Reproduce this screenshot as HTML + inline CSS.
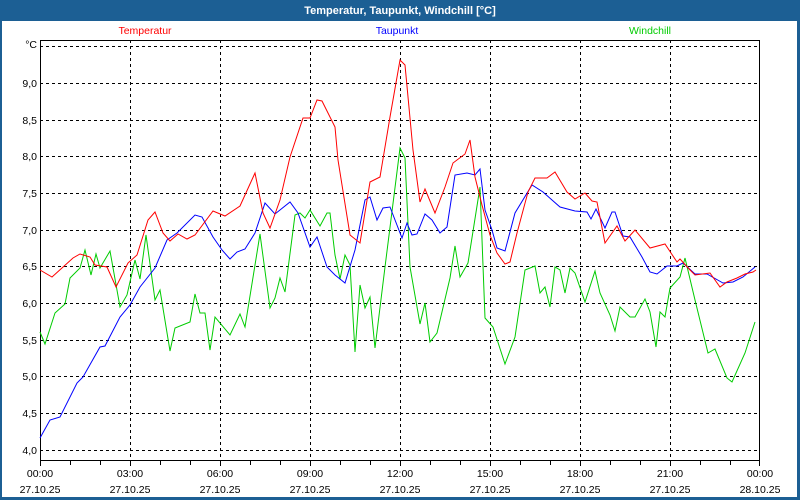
<!DOCTYPE html>
<html><head><meta charset="utf-8"><style>
html,body{margin:0;padding:0;background:#1c5f94;}
svg{display:block;font-family:"Liberation Sans",Arial,sans-serif;}
</style></head><body>
<svg width="800" height="500" viewBox="0 0 800 500" xmlns="http://www.w3.org/2000/svg">
<rect x="0" y="0" width="800" height="500" fill="#1c5f94"/>
<rect x="2" y="21" width="795" height="476" fill="#fff"/>
<text x="400" y="14" fill="#fff" font-size="11" font-weight="bold" text-anchor="middle">Temperatur, Taupunkt, Windchill [°C]</text>
<text x="145" y="34" fill="#ff0000" font-size="10.5" text-anchor="middle">Temperatur</text>
<text x="397" y="34" fill="#0000ff" font-size="10.5" text-anchor="middle">Taupunkt</text>
<text x="650" y="34" fill="#00cc00" font-size="10.5" text-anchor="middle">Windchill</text>
<g stroke="#000" stroke-width="1" stroke-dasharray="3,3" fill="none" shape-rendering="crispEdges">
<path d="M40 46.5H760M40 83.5H760M40 120.5H760M40 156.5H760M40 193.5H760M40 230.5H760M40 266.5H760M40 303.5H760M40 340.5H760M40 376.5H760M40 413.5H760M40 450.5H760"/>
<path d="M130.5 40V461M220.5 40V461M310.5 40V461M400.5 40V461M490.5 40V461M580.5 40V461M670.5 40V461"/>
</g>
<g stroke="#000" stroke-width="1" fill="none" shape-rendering="crispEdges">
<rect x="40.5" y="40.5" width="719" height="420"/>
<path d="M70.5 461v4M100.5 461v4M130.5 461v5M160.5 461v4M190.5 461v4M220.5 461v5M250.5 461v4M280.5 461v4M310.5 461v5M340.5 461v4M370.5 461v4M400.5 461v5M430.5 461v4M460.5 461v4M490.5 461v5M520.5 461v4M550.5 461v4M580.5 461v5M610.5 461v4M640.5 461v4M670.5 461v5M700.5 461v4M730.5 461v4M40.5 461v5M759.5 461v5"/>
</g>
<g font-size="10.5" fill="#000" text-anchor="end">
<text x="37" y="48">°C</text>
<text x="37" y="87">9,0</text><text x="37" y="124">8,5</text><text x="37" y="160">8,0</text>
<text x="37" y="197">7,5</text><text x="37" y="234">7,0</text><text x="37" y="270">6,5</text>
<text x="37" y="307">6,0</text><text x="37" y="344">5,5</text><text x="37" y="380">5,0</text>
<text x="37" y="417">4,5</text><text x="37" y="454">4,0</text>
</g>
<g font-size="10.5" fill="#000" text-anchor="middle">
<text x="40" y="477">00:00</text><text x="130" y="477">03:00</text><text x="220" y="477">06:00</text><text x="310" y="477">09:00</text><text x="400" y="477">12:00</text><text x="490" y="477">15:00</text><text x="580" y="477">18:00</text><text x="670" y="477">21:00</text><text x="760" y="477">00:00</text>
<text x="40" y="493">27.10.25</text><text x="130" y="493">27.10.25</text><text x="220" y="493">27.10.25</text><text x="310" y="493">27.10.25</text><text x="400" y="493">27.10.25</text><text x="490" y="493">27.10.25</text><text x="580" y="493">27.10.25</text><text x="670" y="493">27.10.25</text><text x="760" y="493">28.10.25</text>
</g>
<g fill="none" stroke-width="1">
<polyline stroke="#00cc00" points="40,332 45,344 55,313 65,304 70,278 80,268 85,250 91,275 96,254 100,268 110,251 120,307 127,295 135,260 140,279 146,235 155,300 160,290 170,351 175,328 190,322 195,294 200,313 205,313 210,350 215,317 230,335 240,314 245,327 260,234 270,308 275,298 280,278 285,292 295,215 300,213 305,218 310,210 320,226 327,213 330,213 335,255 340,279 345,255 350,265 355,352 360,285 365,308 370,297 375,348 385,267 400,148 405,158 410,267 420,324 425,303 430,342 437,333 450,278 455,246 460,277 468,263 480,187 485,318 493,327 505,364 515,337 525,270 535,266 540,293 545,287 550,307 555,267 560,270 565,293 570,268 575,273 585,302 595,271 600,293 610,315 615,331 620,307 630,317 635,317 645,299 650,312 656,347 660,312 665,317 670,288 680,277 685,258 695,300 708,353 715,349 727,378 732,382 745,353 755,322"/>
<polyline stroke="#0000ff" points="40,438 50,420 60,417 77,383 83,377 100,347 105,346 120,317 130,305 140,287 155,268 167,240 177,233 195,215 202,217 213,237 222,250 230,259 237,252 245,249 255,233 265,203 275,214 290,202 298,213 310,247 317,237 327,267 335,275 345,283 355,250 365,200 370,197 377,220 383,208 390,207 402,238 407,223 412,235 417,234 425,214 432,220 440,233 447,227 455,175 467,173 475,175 480,169 485,210 492,230 497,248 505,251 515,213 532,185 543,192 552,200 560,207 575,211 587,212 591,219 596,209 605,228 612,212 615,212 623,236 630,237 642,257 650,272 657,274 667,266 677,266 683,263 695,274 707,274 723,283 733,282 743,277 755,267"/>
<polyline stroke="#ff0000" points="40,270 52,277 73,258 80,254 90,257 95,265 107,267 116,287 128,263 137,255 148,220 155,212 163,233 170,241 178,234 187,239 195,235 213,211 225,216 240,206 255,173 263,213 270,228 280,200 290,157 303,118 310,118 317,100 322,101 335,127 338,160 350,235 360,243 370,182 380,177 390,117 400,60 405,65 413,150 420,202 425,189 435,213 445,187 453,163 465,154 470,140 475,177 482,205 490,235 497,253 505,264 510,262 517,233 528,192 535,178 547,178 555,172 567,192 575,199 585,193 592,201 597,202 605,243 617,226 625,241 635,230 650,248 665,244 677,262 680,259 690,270 695,275 710,273 720,287 727,282 737,278 745,274 753,272 756,270"/>
</g>
</svg>
</body></html>
